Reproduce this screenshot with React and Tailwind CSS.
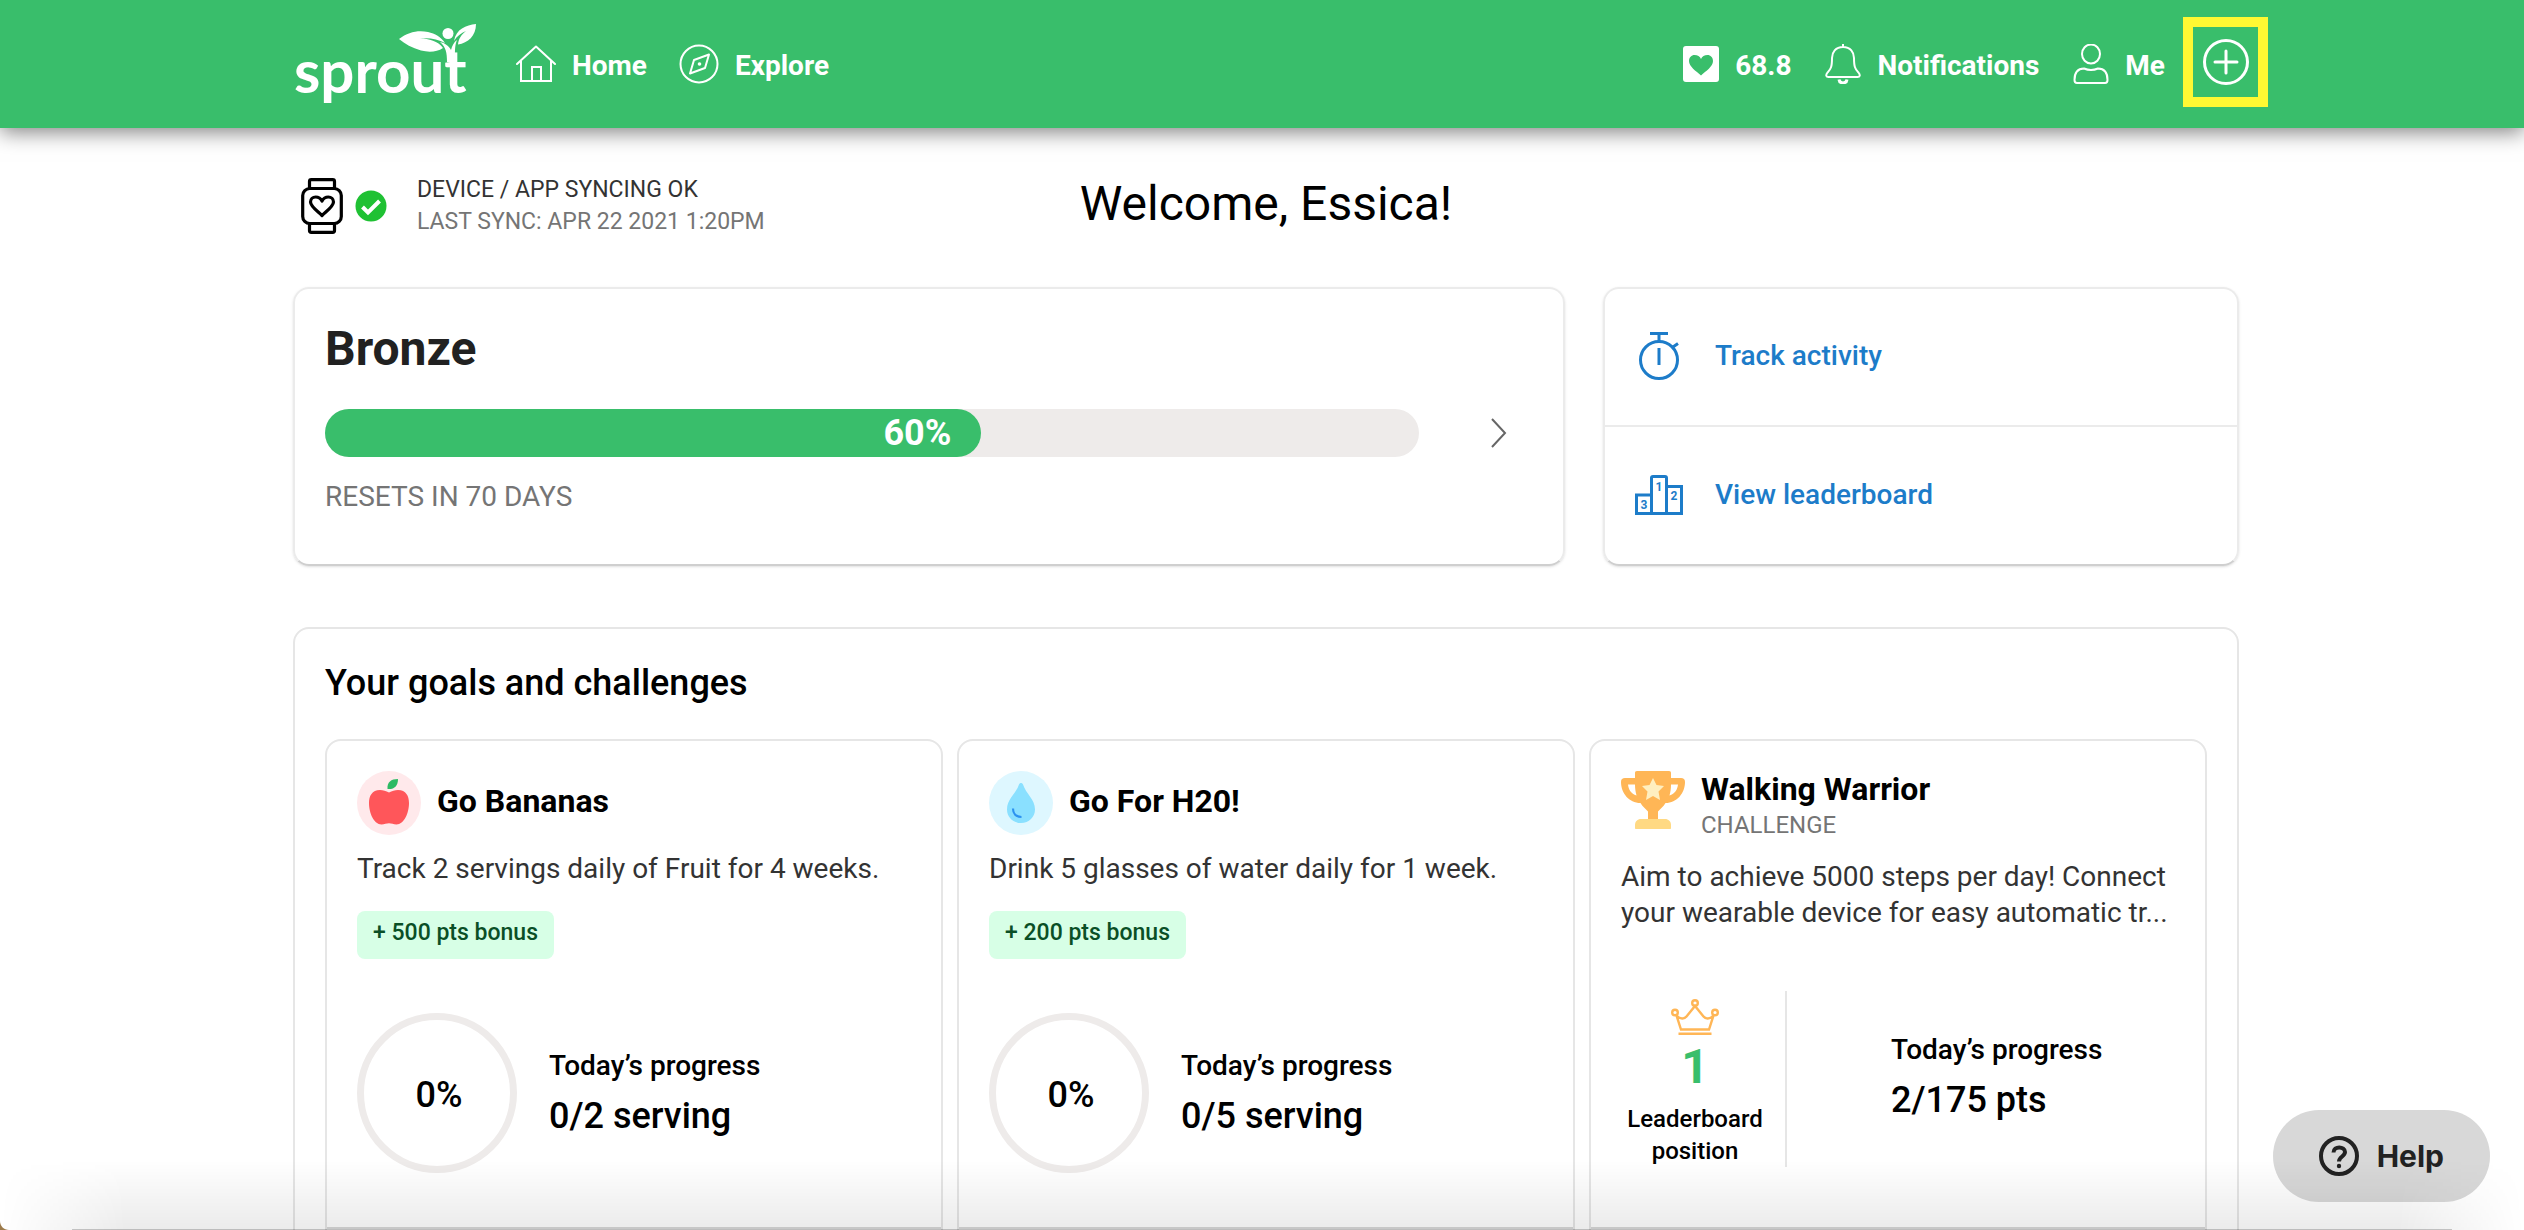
// Sprout member dashboard.
// Header nav, sync status, level progress, quick links, goals and challenges.

const NAV_LEFT = [
  { label: 'Home', icon: HomeIcon },
  { label: 'Explore', icon: CompassIcon },
]

const NAV_RIGHT = [
  { label: '68.8', icon: HeartIcon },
  { label: 'Notifications', icon: BellIcon },
  { label: 'Me', icon: UserIcon },
]

const QUICK_LINKS = [
  { label: 'Track activity', icon: StopwatchIcon },
  { label: 'View leaderboard', icon: PodiumIcon },
]

const GOALS = [
  {
    title: 'Go Bananas',
    icon: AppleIcon,
    description: 'Track 2 servings daily of Fruit for 4 weeks.',
    bonus: '+ 500 pts bonus',
    percent: '0%',
    progress: '0/2 serving',
  },
  {
    title: 'Go For H20!',
    icon: DropIcon,
    description: 'Drink 5 glasses of water daily for 1 week.',
    bonus: '+ 200 pts bonus',
    percent: '0%',
    progress: '0/5 serving',
  },
]

const LEVEL = { name: 'Bronze', percent: 60, resets: 'RESETS IN 70 DAYS' }

/* ── Icons ── */

function HomeIcon() {
  return (
    <svg viewBox="0 0 40 40" className="size-10" fill="none" stroke="currentColor" strokeWidth="2" aria-hidden="true">
      <path d="M1 20 20 2.500l19 17.500" strokeLinecap="round" strokeLinejoin="round" />
      <path d="M5 17v20h30V17M16 37V23h9v14" />
    </svg>
  )
}

function CompassIcon() {
  return (
    <svg viewBox="0 0 40 40" className="size-10" fill="none" stroke="currentColor" strokeWidth="2" aria-hidden="true">
      <circle cx="20" cy="20" r="18.500" />
      <path d="M30 10.500 26 24 11 29.500 15 16Z" strokeLinejoin="round" />
      <circle cx="20.500" cy="20" r="1.800" fill="currentColor" stroke="none" />
    </svg>
  )
}

function HeartIcon() {
  return (
    <svg viewBox="0 0 36 40" className="h-10 w-9" aria-hidden="true">
      <rect y="2" width="36" height="36" rx="3" fill="#fff" />
      <path d="M18 31.500C13 27 6 22.500 6 17c0-3.500 2.500-6 5.500-6 3 0 5.500 1.500 6.500 4 1-2.500 3.500-4 6.500-4 3 0 5.500 2.500 5.500 6 0 5.500-7 10-12 14.500Z" fill="#39be6b" />
    </svg>
  )
}

function BellIcon() {
  return (
    <svg viewBox="0 0 36 40" className="h-10 w-9" fill="none" stroke="currentColor" strokeWidth="2" aria-hidden="true">
      <path d="M18 0v3M18 3C10.500 3 7 8.500 7 14c0 10-1.500 11-4.500 14.500C.5 31 1 33 3.500 33h29c2.500 0 3-2 1-4.500C30.500 25 29 24 29 14c0-5.500-3.500-11-11-11Z" />
      <path d="M14 35.500c.5 4.500 7.500 4.500 8 0" strokeWidth="3" />
    </svg>
  )
}

function UserIcon() {
  return (
    <svg viewBox="0 0 36 40" className="h-10 w-9" fill="none" stroke="currentColor" strokeWidth="2" aria-hidden="true">
      <ellipse cx="18" cy="10" rx="9" ry="9.500" />
      <path d="M11 24.500c4 1.800 10 1.800 14 0 5 0 9.500 3 9.500 11.500 0 2-.5 3-2.500 3H4c-2 0-2.500-1-2.500-3C1.500 27.500 6 24.500 11 24.500Z" />
    </svg>
  )
}

function PlusIcon() {
  return (
    <svg viewBox="0 0 48 48" className="size-12" fill="none" stroke="currentColor" strokeWidth="3" strokeLinecap="round" aria-hidden="true">
      <circle cx="24" cy="24" r="21.500" />
      <path d="M24 13v22M13 24h22" />
    </svg>
  )
}

function WatchIcon() {
  return (
    <svg viewBox="0 0 42 56" className="h-14 w-[42px]" fill="none" stroke="#000" strokeWidth="3.200" strokeLinejoin="round" aria-hidden="true">
      <path d="M8.500 10V3.500c0-1 .5-1.800 1.800-1.800h21.400c1.300 0 1.800.8 1.800 1.800V10M8.500 46v6.500c0 1 .5 1.800 1.800 1.800h21.400c1.300 0 1.800-.8 1.800-1.800V46" />
      <rect x="1.700" y="10.500" width="38.600" height="35" rx="7" />
      <path d="M21 37.500c-4-4-11.500-9-11.500-13.500 0-3 2.300-5 5.200-5 2.800 0 5 1.500 6.300 4 1.300-2.500 3.500-4 6.300-4 2.900 0 5.200 2 5.200 5 0 4.500-7.500 9.500-11.500 13.500Z" />
    </svg>
  )
}

function CheckBadge() {
  return (
    <svg viewBox="0 0 32 32" className="size-8" aria-hidden="true">
      <circle cx="16" cy="16" r="15.500" fill="#1fc133" />
      <path d="m7.500 17 5.500 5.500L24.500 11" fill="none" stroke="#fff" strokeWidth="4" />
    </svg>
  )
}

function StopwatchIcon() {
  return (
    <svg viewBox="0 0 48 48" className="size-12" fill="none" stroke="currentColor" strokeWidth="3" aria-hidden="true">
      <circle cx="24" cy="28" r="18.500" />
      <path d="M24 9V1M15 1.500h18M24 16v17M36.500 16l6.500-4.500" />
    </svg>
  )
}

function PodiumIcon() {
  return (
    <svg viewBox="0 0 48 48" className="size-12" fill="none" stroke="currentColor" strokeWidth="3" aria-hidden="true">
      <path d="M1.500 43V24h15M16.500 43V7c0-1 .5-1.500 1.500-1.500h12c1 0 1.500.5 1.500 1.500v36M31.500 15.500h15V43M0 42.500h48" />
      <g fill="currentColor" stroke="none" fontFamily="Roboto, sans-serif" fontSize="12" fontWeight="700" textAnchor="middle">
        <text x="24" y="20">1</text>
        <text x="39" y="29">2</text>
        <text x="9" y="38">3</text>
      </g>
    </svg>
  )
}

function AppleIcon() {
  return (
    <svg viewBox="0 0 64 64" className="size-16" aria-hidden="true">
      <circle cx="32" cy="32" r="32" fill="#ffe9eb" />
      <path d="M32 21.500c3-1.500 6-2.500 9-2.500 8 0 11 6 11 13 0 10-5 21.500-12.500 21.500-3 0-5-1.200-7.500-1.200s-4.500 1.200-7.500 1.200C17 53.500 12 42 12 32c0-7 3-13 11-13 3 0 6 1 9 2.500Z" fill="#ff565a" />
      <path d="M30.500 18C30 11 34 8 41 8c0 7-3.500 10.500-10.500 10Z" fill="#2dba64" />
    </svg>
  )
}

function DropIcon() {
  return (
    <svg viewBox="0 0 64 64" className="size-16" aria-hidden="true">
      <circle cx="32" cy="32" r="32" fill="#def7ff" />
      <path d="M30 13.500c.8-2 3.200-2 4 0C37 23 46 28 46 38.500 46 46 40 52 32 52s-14-6-14-13.500C18 28 27 23 30 13.500Z" fill="#8ae0ff" />
      <path d="M24 37.500c0 5 3 8.500 8.500 8.500" fill="none" stroke="#2c92f0" strokeWidth="2.200" />
    </svg>
  )
}

function TrophyIcon() {
  return (
    <svg viewBox="0 0 64 58" className="h-[58px] w-16" aria-hidden="true">
      <path
        fillRule="evenodd"
        d="M16 0h32c1.500 0 2 .8 2 2v5h10c2.500 0 4 1 4 4 0 11-8 21-19.500 21-2 3.500-5 5.500-7.500 8.500V48H27v-7.500c-2.500-3-5.500-5-7.500-8.500C8 32 0 22 0 11c0-3 1.500-4 4-4h10V2c0-1.200.5-2 2-2ZM7 13.500c.5 5 3 9 8.500 11-1-3.500-1.500-7-1.500-11H7Zm43 0c0 4-.5 7.500-1.500 11 5.500-2 8-6 8.500-11h-7Z"
        fill="#ffb656"
      />
      <path d="m32 7 3.500 7 7.500 1-5.500 5.500L39 29l-7-4-7 4 1.500-8.500L21 15l7.500-1Z" fill="#ffefc0" />
      <path d="M14 57v-3c0-3.500 2.500-6 6-6h24c3.500 0 6 2.500 6 6v3c0 .6-.4 1-1 1H15c-.6 0-1-.4-1-1Z" fill="#ffd983" />
    </svg>
  )
}

function CrownIcon() {
  return (
    <svg viewBox="0 0 48 36" className="h-9 w-12" fill="none" stroke="#ffb656" strokeWidth="2.400" aria-hidden="true">
      <circle cx="24" cy="4" r="2.800" />
      <circle cx="4" cy="13.500" r="2.800" />
      <circle cx="44" cy="13.500" r="2.800" />
      <path d="M5.500 16.500 10 30.500h28l4.500-14c-4 4-8 3.500-10 1L24 7l-8.500 10.500c-2 2.500-6 3-10-1ZM7.500 34.800h33" />
    </svg>
  )
}

function HelpIcon() {
  return (
    <svg viewBox="0 0 40 40" className="size-10" fill="none" stroke="currentColor" strokeWidth="4" aria-hidden="true">
      <circle cx="20" cy="20" r="18" />
      <path d="M14.500 16.500c0-7 11.500-6.500 11.500-.5 0 4.500-6 4.500-6 9.500" />
      <circle cx="20" cy="30" r="2.200" fill="currentColor" stroke="none" />
    </svg>
  )
}

function Logo() {
  return (
    <a href="#home" className="relative block h-32 w-[184px] text-white">
      <span className="block pt-8 font-['Lato',sans-serif] text-[60px] leading-[76px] font-bold">sprout</span>
      {/* Leaves and figure growing out of the "t" */}
      <svg viewBox="0 0 80 40" className="absolute top-6 right-0 h-10 w-20" fill="currentColor" aria-hidden="true">
        <path d="M1 15C10 8 20 6 30 8c7 1.500 13 5 17 11-7-4-16-5.500-25-4.500 9 0 18 2.500 23 9.500-6 4-14 4.500-22 2.500C14 24 7 20 1 15Z" />
        <circle cx="50" cy="9.500" r="5.500" />
        <path d="M78 0C68 1 58 5 56 17c3-5 7-8 12-10-5 4-7.500 8-8 13.500C70 19 78 12 78 0Z" />
        <path d="M42 18c5 1 9 4 11 8 1-4 3-8 6-10-2.500 6-2 12-2 22h-8c0-9-1-15-7-20Z" />
      </svg>
    </a>
  )
}

/* ── Layout pieces ── */

function NavLink({ item }) {
  const Icon = item.icon
  return (
    <a href={`#${item.label.toLowerCase()}`} className="flex items-center gap-4 text-[28px] leading-8 font-bold text-white">
      <Icon />
      <span className="pt-1">{item.label}</span>
    </a>
  )
}

function Header() {
  return (
    <header className="bg-[#39be6b] shadow-[0_4px_20px_rgba(0,0,0,0.5)]">
      <div className="mx-auto flex h-32 max-w-[2012px] items-center pl-[38px]">
        <Logo />
        <nav className="ml-[38px] flex items-center gap-8">
          {NAV_LEFT.map(item => <NavLink key={item.label} item={item} />)}
        </nav>
        <nav className="ml-auto flex items-center gap-[34px]">
          {NAV_RIGHT.map(item => <NavLink key={item.label} item={item} />)}
        </nav>
        <button type="button" aria-label="Add" className="mb-1 ml-[18px] flex h-[90px] w-[85px] items-center justify-center border-10 border-[#fff833] text-white">
          <PlusIcon />
        </button>
      </div>
    </header>
  )
}

function SyncStatus() {
  return (
    <div className="grid grid-cols-3 items-center pt-[46px]">
      <div className="flex items-center pl-2">
        <WatchIcon />
        <div className="ml-3"><CheckBadge /></div>
        <div className="ml-[30px] text-[23px] leading-8 whitespace-nowrap">
          <p className="text-[#333]">DEVICE / APP SYNCING OK</p>
          <p className="text-[#757575]">LAST SYNC: APR 22 2021 1:20PM</p>
        </div>
      </div>
      <h1 className="pb-1 text-center text-5xl whitespace-nowrap text-black">Welcome, Essica!</h1>
    </div>
  )
}

function LevelCard() {
  return (
    <section className="rounded-2xl border-2 border-[#ebebeb] border-b-[#cfcfcf] pt-8 pr-14 pl-[30px] shadow-sm">
      <h2 className="text-5xl leading-14 font-bold text-[#212121]">{LEVEL.name}</h2>
      <div className="mt-8 flex items-center">
        <div className="h-12 flex-1 rounded-full bg-[#eeebea]">
          <div
            className="flex h-12 items-center justify-end rounded-full bg-[#39be6b] pr-[30px] text-4xl font-bold text-white"
            style={{ width: `${LEVEL.percent}%` }}
          >
            {LEVEL.percent}%
          </div>
        </div>
        <button type="button" aria-label="Level details" className="ml-[72px] text-[#666]">
          <svg viewBox="0 0 16 30" className="h-[30px] w-4" fill="none" stroke="currentColor" strokeWidth="2" aria-hidden="true">
            <path d="m1 1 13 14L1 29" />
          </svg>
        </button>
      </div>
      <p className="mt-6 text-[28px] leading-8 text-[#757575]">{LEVEL.resets}</p>
    </section>
  )
}

function QuickLinks() {
  return (
    <nav className="grid grid-rows-2 divide-y-2 divide-[#ebebeb] rounded-2xl border-2 border-[#ebebeb] border-b-[#cfcfcf] shadow-sm">
      {QUICK_LINKS.map(({ label, icon: Icon }) => (
        <a key={label} href="#activity" className="flex items-center gap-8 pb-px pl-[30px] text-[28px] leading-8 font-medium text-[#1d7cc9]">
          <Icon />
          {label}
        </a>
      ))}
    </nav>
  )
}

function TodayProgress({ value }) {
  return (
    <div className="text-black">
      <p className="text-[28px] leading-8 font-medium">Today’s progress</p>
      <p className="mt-[14px] text-4xl leading-10 font-medium">{value}</p>
    </div>
  )
}

function Card({ children }) {
  return (
    <article className="flex flex-col rounded-t-2xl border-2 border-[#e6e6e6]">
      <div className="h-[486px] px-[30px] pt-[30px]">{children}</div>
      <div className="h-20 border-t-2 border-[#d8d8d8]" />
    </article>
  )
}

function GoalCard({ goal }) {
  const Icon = goal.icon
  return (
    <Card>
      <div className="flex items-center gap-4">
        <Icon />
        <h3 className="pb-1 text-[32px] leading-10 font-bold text-black">{goal.title}</h3>
      </div>
      <p className="mt-4 text-[28px] leading-9 text-[#333]">{goal.description}</p>
      <span className="mt-6 inline-block h-12 rounded-lg bg-[#d7ffe6] px-4 text-[23px] leading-11 font-medium text-[#0a4f26]">
        {goal.bonus}
      </span>
      <div className="mt-[54px] flex items-center gap-8">
        <div className="flex size-40 items-center justify-center rounded-full border-[7px] border-[#eeebea] pt-1 pl-1 text-4xl font-medium text-black">
          {goal.percent}
        </div>
        <TodayProgress value={goal.progress} />
      </div>
    </Card>
  )
}

function ChallengeCard() {
  return (
    <Card>
      <div className="flex items-start gap-4">
        <TrophyIcon />
        <div>
          <h3 className="text-[32px] leading-9 font-bold text-black">Walking Warrior</h3>
          <p className="text-2xl leading-9 text-[#757575]">CHALLENGE</p>
        </div>
      </div>
      <p className="mt-4 text-[28px] leading-9 text-[#333]">
        Aim to achieve 5000 steps per day! Connect your wearable device for easy automatic tr...
      </p>
      <div className="mt-15 flex h-44 items-center">
        <div className="flex h-full w-[166px] flex-col items-center border-r-2 border-[#e6e6e6] pt-2 pr-4">
          <CrownIcon />
          <p className="mt-1 text-5xl leading-14 font-bold text-[#39be6b]">1</p>
          <p className="mt-2 text-center text-2xl leading-8 font-medium text-black">Leaderboard position</p>
        </div>
        <div className="pb-1 pl-[104px]">
          <TodayProgress value="2/175 pts" />
        </div>
      </div>
    </Card>
  )
}

export default function App() {
  return (
    <div className="min-h-screen bg-white font-['Roboto','Open_Sans',sans-serif]">
      <Header />
      <main className="mx-auto max-w-[1954px] pl-2">
        <SyncStatus />
        <div className="mt-[49px] grid h-[279px] grid-cols-[2fr_1fr] gap-[38px]">
          <LevelCard />
          <QuickLinks />
        </div>
        <section className="mt-[61px] rounded-t-2xl border-2 border-[#e6e6e6] px-[30px] pt-8">
          <h2 className="text-4xl leading-11 font-medium text-black">Your goals and challenges</h2>
          <div className="mt-[34px] grid grid-cols-3 gap-[14px]">
            {GOALS.map(goal => <GoalCard key={goal.title} goal={goal} />)}
            <ChallengeCard />
          </div>
        </section>
      </main>

      <button
        type="button"
        className="fixed right-[34px] bottom-7 flex h-[92px] items-center gap-[18px] rounded-full bg-[#d8d8d8] px-[46px] font-['Inter',sans-serif] text-[30px] font-bold text-[#222]"
      >
        <HelpIcon />
        Help
      </button>

      {/* Shade along the bottom edge of the window */}
      <div className="pointer-events-none fixed inset-x-0 bottom-0 h-[70px] bg-linear-to-t from-black/8 to-transparent mask-x-from-95%" />
      <div className="pointer-events-none fixed inset-x-18 bottom-0 h-px bg-black/20" />
      <svg viewBox="0 0 9 9" className="pointer-events-none fixed bottom-0 left-0 size-[9px]" aria-hidden="true">
        <path d="M0 0c0 5 4 9 9 9H0Z" fill="#9c7a4a" />
      </svg>
    </div>
  )
}
